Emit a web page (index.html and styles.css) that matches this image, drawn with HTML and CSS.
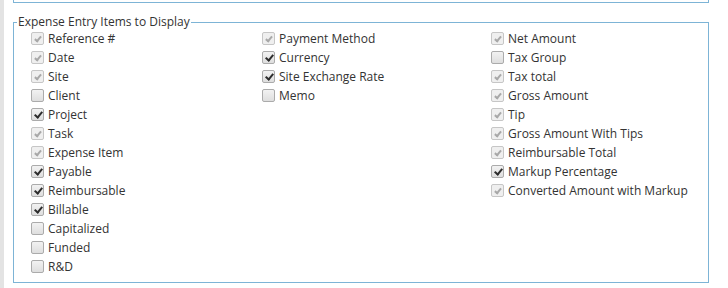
FILE: index.html
```html
<!DOCTYPE html>
<html>
<head>
<meta charset="utf-8">
<link rel="stylesheet" href="styles.css">
</head>
<body>
<div class="strip"></div>
<div class="main">
  <div class="topbox"></div>
  <fieldset class="group">
    <legend class="legend">Expense Entry Items to Display</legend>
    <div class="cols">
      <div class="col">
        <label class="item"><span class="cb dis on"></span>Reference #</label>
        <label class="item"><span class="cb dis on"></span>Date</label>
        <label class="item"><span class="cb dis on"></span>Site</label>
        <label class="item"><span class="cb"></span>Client</label>
        <label class="item"><span class="cb on"></span>Project</label>
        <label class="item"><span class="cb dis on"></span>Task</label>
        <label class="item"><span class="cb dis on"></span>Expense Item</label>
        <label class="item"><span class="cb on"></span>Payable</label>
        <label class="item"><span class="cb on"></span>Reimbursable</label>
        <label class="item"><span class="cb on"></span>Billable</label>
        <label class="item"><span class="cb"></span>Capitalized</label>
        <label class="item"><span class="cb"></span>Funded</label>
        <label class="item"><span class="cb"></span>R&amp;D</label>
      </div>
      <div class="col">
        <label class="item"><span class="cb dis on"></span>Payment Method</label>
        <label class="item"><span class="cb on"></span>Currency</label>
        <label class="item"><span class="cb on"></span>Site Exchange Rate</label>
        <label class="item"><span class="cb"></span>Memo</label>
      </div>
      <div class="col">
        <label class="item"><span class="cb dis on"></span>Net Amount</label>
        <label class="item"><span class="cb"></span>Tax Group</label>
        <label class="item"><span class="cb dis on"></span>Tax total</label>
        <label class="item"><span class="cb dis on"></span>Gross Amount</label>
        <label class="item"><span class="cb dis on"></span>Tip</label>
        <label class="item"><span class="cb dis on"></span>Gross Amount With Tips</label>
        <label class="item"><span class="cb dis on"></span>Reimbursable Total</label>
        <label class="item"><span class="cb on"></span>Markup Percentage</label>
        <label class="item"><span class="cb dis on"></span>Converted Amount with Markup</label>
      </div>
    </div>
  </fieldset>
</div>
</body>
</html>
```
FILE: styles.css
```css
html, body {
  margin: 0;
  padding: 0;
  background: #ffffff;
}
body {
  display: flex;
  height: 288px;
  font-family: "Open Sans", "DejaVu Sans", sans-serif;
  font-size: 12px;
  color: #333333;
}
.strip {
  width: 4px;
  background: #e3e3e3;
  flex: none;
}
.main {
  padding-left: 9px;
  width: 696px;
  flex: none;
}
.topbox {
  height: 2px;
  border: 1px solid #7db4d6;
  border-top: none;
}
.group {
  margin: 12px 0 0 0;
  border: 1px solid #7db4d6;
  padding: 0 0 6px 17px;
  min-width: 0;
}
.legend {
  padding: 0 1px;
  margin-left: -14px;
  font-size: 12px;
  line-height: 14px;
  color: #333333;
}
.cols {
  display: grid;
  grid-template-columns: 231px 229px 1fr;
}
.col {
  display: flex;
  flex-direction: column;
}
.item {
  display: flex;
  align-items: center;
  height: 19px;
  white-space: nowrap;
}
.cb {
  width: 11px;
  height: 11px;
  border: 1px solid #ababab;
  border-radius: 2px;
  background: linear-gradient(#f2f2f2, #dedede);
  margin-right: 4px;
  position: relative;
  flex: none;
}
.cb.on::after {
  content: "";
  position: absolute;
  left: 4px;
  top: 1px;
  width: 3px;
  height: 6px;
  border-right: 2px solid #2d2d2d;
  border-bottom: 2px solid #2d2d2d;
  transform: rotate(40deg);
}
.cb.dis {
  background: #efefef;
  border-color: #c6c6c6;
}
.cb.dis.on::after {
  border-color: #a8a8a8;
  width: 2px;
  height: 5px;
  left: 4px;
  top: 2px;
}
```
